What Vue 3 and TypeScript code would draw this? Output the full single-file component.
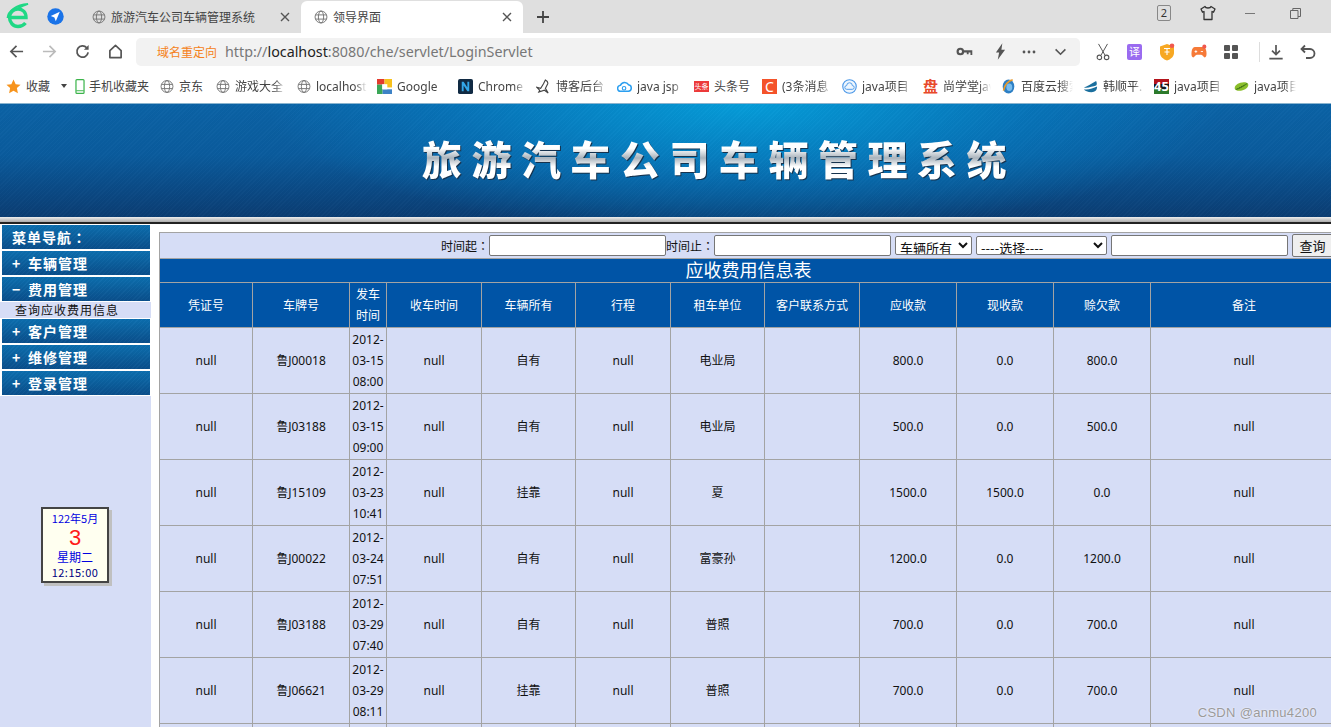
<script setup lang="ts">
const bookmarks = [
  { icon: 'star', text: '收藏', w: 69, caret: true },
  { icon: 'phone', text: '手机收藏夹', w: 85 },
  { icon: 'globe', text: '京东', w: 56 },
  { icon: 'globe', text: '游戏大全', w: 81, fade: true },
  { icon: 'globe', text: 'localhost', w: 80, fade: true },
  { icon: 'google', text: 'Google', w: 81, fade: true },
  { icon: 'n', text: 'Chrome', w: 78, fade: true },
  { icon: 'blog', text: '博客后台', w: 81, fade: true },
  { icon: 'cloud', text: 'java jsp', w: 77, fade: true },
  { icon: 'toutiao', text: '头条号', w: 68 },
  { icon: 'c', text: '(3条消息', w: 80, fade: true },
  { icon: 'pan', text: 'java项目', w: 81, fade: true },
  { icon: 'shang', text: '尚学堂java', w: 78, fade: true },
  { icon: 'baidu', text: '百度云搜索', w: 82, fade: true },
  { icon: 'han', text: '韩顺平.', w: 71, fade: true },
  { icon: 'n45', text: 'java项目', w: 80, fade: true },
  { icon: 'leaf', text: 'java项目', w: 72, fade: true },
]

const menu = [
  { mark: '+', label: '车辆管理' },
  { mark: '−', label: '费用管理', sub: '查询应收费用信息' },
  { mark: '+', label: '客户管理' },
  { mark: '+', label: '维修管理' },
  { mark: '+', label: '登录管理' },
]

const colWidths: number[] = [93, 97, 37, 95, 94, 95, 94, 95, 97, 97, 97, 187]
const heads: string[] = ['凭证号', '车牌号', '发车时间', '收车时间', '车辆所有', '行程', '租车单位', '客户联系方式', '应收款', '现收款', '赊欠款', '备注']
const rows: string[][] = [
  ['null', '鲁J00018', '2012-03-15 08:00', 'null', '自有', 'null', '电业局', '', '800.0', '0.0', '800.0', 'null'],
  ['null', '鲁J03188', '2012-03-15 09:00', 'null', '自有', 'null', '电业局', '', '500.0', '0.0', '500.0', 'null'],
  ['null', '鲁J15109', '2012-03-23 10:41', 'null', '挂靠', 'null', '夏', '', '1500.0', '1500.0', '0.0', 'null'],
  ['null', '鲁J00022', '2012-03-24 07:51', 'null', '自有', 'null', '富豪孙', '', '1200.0', '0.0', '1200.0', 'null'],
  ['null', '鲁J03188', '2012-03-29 07:40', 'null', '自有', 'null', '普照', '', '700.0', '0.0', '700.0', 'null'],
  ['null', '鲁J06621', '2012-03-29 08:11', 'null', '挂靠', 'null', '普照', '', '700.0', '0.0', '700.0', 'null'],
  ['null', '鲁J06621', '2012-03-29 08:30', 'null', '挂靠', 'null', '普照', '', '700.0', '0.0', '700.0', 'null'],
]
</script>

<template>
  <div class="page">
    <svg class="defs" aria-hidden="true">
      <symbol id="globe" viewBox="0 0 16 16">
        <g fill="none" stroke="#777" stroke-width="1.1">
          <circle cx="8" cy="8" r="6.8" />
          <ellipse cx="8" cy="8" rx="3" ry="6.8" />
          <path d="M1.6 5.6h12.8M1.6 10.4h12.8" />
        </g>
      </symbol>
    </svg>

    <!-- browser tab strip -->
    <div class="tabstrip">
      <svg class="logo" viewBox="0 0 24 26">
        <path d="M4 14.5h16C20 9 16.500 6 12 6c-5 0-8.500 3.800-8.500 8.500S7 23.500 12 23.500c3.200 0 5.800-1.300 7.500-3.500" fill="none" stroke="#20d885" stroke-width="3.400" />
        <path d="M1.500 15C2 8 10 2 22 1c-5 2-8 3-11 5" fill="none" stroke="#20d885" stroke-width="1.800" />
      </svg>
      <svg class="nav-badge" viewBox="0 0 17 17">
        <circle cx="8.500" cy="8.500" r="8.200" fill="#1a73e8" />
        <path d="M12.800 3.800 3.800 8l3.600 1.500 1.400 3.800z" fill="#fff" />
      </svg>
      <div class="tab">
        <svg class="ico14"><use href="#globe" /></svg>
        <span class="tab-title">旅游汽车公司车辆管理系统</span>
        <svg class="tab-x" viewBox="0 0 10 10"><path d="M1 1l8 8M9 1l-8 8" stroke="#555" stroke-width="1.400" /></svg>
      </div>
      <div class="tab active">
        <svg class="ico14"><use href="#globe" /></svg>
        <span class="tab-title">领导界面</span>
        <svg class="tab-x" viewBox="0 0 10 10"><path d="M1 1l8 8M9 1l-8 8" stroke="#555" stroke-width="1.400" /></svg>
      </div>
      <svg class="plus" viewBox="0 0 14 14"><path d="M7 1v12M1 7h12" stroke="#444" stroke-width="1.800" /></svg>
      <div class="win">
        <span class="count">2</span>
        <svg class="shirt" viewBox="0 0 16 16"><path d="M5 1.500 1 4l1.500 3.200L4 6.500V14.500h8V6.500l1.500.700L15 4l-4-2.500C10.500 3.500 5.500 3.500 5 1.500z" fill="none" stroke="#333" stroke-width="1.300" stroke-linejoin="round" /></svg>
        <span class="minimize"></span>
        <svg class="restore" viewBox="0 0 11 11"><path d="M.5 2.500h7.500v8H.5zM2.800 2.500V.5h7.700v8H8" fill="none" stroke="#666" stroke-width="1" /></svg>
      </div>
    </div>

    <!-- toolbar -->
    <div class="toolbar">
      <div class="nav-icons">
        <svg viewBox="0 0 16 16"><path d="M15 8H2M8 2 2 8l6 6" fill="none" stroke="#555" stroke-width="1.800" /></svg>
        <svg viewBox="0 0 16 16"><path d="M1 8h13M8 2l6 6-6 6" fill="none" stroke="#bbb" stroke-width="1.800" /></svg>
        <svg viewBox="0 0 16 16"><path d="M14 9a6 6 0 1 1-1.500-5" fill="none" stroke="#555" stroke-width="1.900" /><path d="M14.500 1v5h-5z" fill="#555" /></svg>
        <svg viewBox="0 0 16 16"><path d="M2 14.500V7l6-5.500L14 7v7.500z" fill="none" stroke="#555" stroke-width="1.800" stroke-linejoin="round" /></svg>
      </div>
      <div class="address">
        <span class="redirect">域名重定向</span>
        <span class="url">http://<b>localhost</b>:8080/che/servlet/LoginServlet</span>
        <div class="addr-icons">
          <svg class="i-key" viewBox="0 0 18 12"><circle cx="4.500" cy="6" r="3" fill="none" stroke="#555" stroke-width="2.400" /><path d="M7 4.700h10.500v5h-2V7h-2v2h-2V7H7z" fill="#555" /></svg>
          <svg class="i-bolt" viewBox="0 0 12 18"><path d="M8 0 1 10h3.500L3 18l8-11H7z" fill="#555" /></svg>
          <svg class="i-dots" viewBox="0 0 14 4"><circle cx="2" cy="2" r="1.400" fill="#555" /><circle cx="7" cy="2" r="1.400" fill="#555" /><circle cx="12" cy="2" r="1.400" fill="#555" /></svg>
          <svg class="i-chev" viewBox="0 0 14 9"><path d="M1.500 1.500 7 7l5.500-5.500" fill="none" stroke="#555" stroke-width="1.800" /></svg>
        </div>
      </div>
      <div class="ext-icons">
        <svg viewBox="0 0 16 20"><path d="M3 1l7.500 13M13 1 5.500 14" fill="none" stroke="#555" stroke-width="1.100" /><circle cx="4" cy="16" r="2.500" fill="none" stroke="#555" stroke-width="1.200" /><circle cx="12" cy="16" r="2.500" fill="none" stroke="#555" stroke-width="1.200" /></svg>
        <span class="translate">译</span>
        <svg viewBox="0 0 16 18"><path d="M1 3.500 8 1l7 2.500V10c0 3.500-3.500 6.500-7 7.500C4.500 16.500 1 13.500 1 10z" fill="#f7a823" /><path d="M5 5.500h6M8 5v7M5.500 9h5" stroke="#fff" stroke-width="1.100" /><circle cx="13" cy="2.800" r="2.300" fill="#f0584e" /></svg>
        <svg viewBox="0 0 18 17"><path d="M4.500 3h9c2 0 3.300 1.800 3.800 5 .4 2.800.2 6-1.300 6.500-1.800.6-2.800-3-4.500-3h-5c-1.700 0-2.700 3.600-4.500 3C.5 14 .3 10.800.7 8 1.200 4.800 2.500 3 4.500 3z" fill="#f67a38" /><path d="M4 8h3M5.500 6.500v3M11 8h2.500" stroke="#fff" stroke-width="1" /><circle cx="15" cy="2.500" r="2.300" fill="#f0584e" /></svg>
        <svg viewBox="0 0 16 16"><rect x="1" y="1" width="6" height="6" rx="1" fill="#555" /><rect x="9" y="1" width="6" height="6" rx="1" fill="#555" /><rect x="1" y="9" width="6" height="6" rx="1" fill="#555" /><rect x="9" y="9" width="6" height="6" rx="1" fill="#555" /></svg>
        <span class="divider"></span>
        <svg viewBox="0 0 18 18"><path d="M9 1v11M4.500 7.500 9 12l4.500-4.500M1.500 16.500h15" fill="none" stroke="#555" stroke-width="1.900" /></svg>
        <svg viewBox="0 0 16 16"><path d="M5 1.500 1.500 5 5 8.500M2 5h8a4.500 4.500 0 0 1 0 9H6" fill="none" stroke="#555" stroke-width="1.800" /></svg>
      </div>
    </div>

    <!-- bookmarks -->
    <div class="bookmarks">
      <div v-for="b in bookmarks" :key="b.icon + b.text" class="bm" :style="{ width: b.w + 'px' }">
        <svg v-if="b.icon === 'star'" class="bi" viewBox="0 0 16 16"><path d="M8 .5l2.300 5 5.200.6-3.900 3.600 1.100 5.400L8 12.400l-4.700 2.700 1.100-5.400L.5 6.100l5.200-.6z" fill="#f7941d" /></svg>
        <svg v-else-if="b.icon === 'phone'" class="bi phone" viewBox="0 0 10 16"><rect x=".7" y=".7" width="8.600" height="14.600" rx="1" fill="none" stroke="#3cb44b" stroke-width="1.300" /><path d="M1 12.500h8" stroke="#3cb44b" /></svg>
        <svg v-else-if="b.icon === 'globe'" class="bi globe"><use href="#globe" /></svg>
        <svg v-else-if="b.icon === 'google'" class="bi" viewBox="0 0 16 16"><rect width="8" height="6" fill="#e33b2e" /><rect x="8" width="8" height="9" fill="#f8c11c" /><rect y="6" width="6" height="10" fill="#3aa757" /><rect x="6" y="11" width="10" height="5" fill="#3d82c6" /><rect x="5.500" y="5.500" width="5.500" height="5.500" fill="#fff" /></svg>
        <svg v-else-if="b.icon === 'n'" class="bi" viewBox="0 0 16 16"><rect width="16" height="16" rx="2" fill="#102a43" /><path d="M4 13V3h2l4 6V3h2v10h-2L6 7v6z" fill="#33a7e8" /></svg>
        <svg v-else-if="b.icon === 'blog'" class="bi" viewBox="0 0 16 16"><path d="M10 1c2 1 3 2 2.500 4L10 10l3 5-4-3-6 2 1-2L1 9l4 1 3-5z" fill="none" stroke="#444" stroke-width="1.200" /></svg>
        <svg v-else-if="b.icon === 'cloud'" class="bi" viewBox="0 0 17 14"><path d="M4.500 12.500a3.500 3.500 0 0 1-.5-7A5 5 0 0 1 13 5a3.800 3.800 0 0 1 0 7.500z" fill="none" stroke="#2c9ff0" stroke-width="1.700" /><circle cx="8" cy="9" r="2" fill="none" stroke="#2c9ff0" stroke-width="1.300" /></svg>
        <span v-else-if="b.icon === 'toutiao'" class="bi toutiao">头条</span>
        <span v-else-if="b.icon === 'c'" class="bi c-ico">C</span>
        <svg v-else-if="b.icon === 'pan'" class="bi" viewBox="0 0 16 16"><circle cx="8" cy="8" r="7.200" fill="#eef6fe" stroke="#4a97e8" stroke-width="1.200" /><path d="M5 11a2 2 0 0 1 0-4 3 3 0 0 1 6 0 2 2 0 0 1 0 4z" fill="none" stroke="#4a97e8" stroke-width="1" /></svg>
        <span v-else-if="b.icon === 'shang'" class="bi shang">盘</span>
        <svg v-else-if="b.icon === 'baidu'" class="bi" viewBox="0 0 16 18"><ellipse cx="8" cy="9" rx="7" ry="8.500" fill="#2d7fc4" /><path d="M2 14C3 7 8 2 13 1" fill="none" stroke="#e89a2c" stroke-width="2" /><ellipse cx="9" cy="10" rx="3.500" ry="4.500" fill="#79bdee" /></svg>
        <svg v-else-if="b.icon === 'han'" class="bi" viewBox="0 0 16 14"><path d="M1 8c3-1 8-4 13-7 1 2 1 4 0 5-4 1-9 3-13 2zM1 10c4 1 10-1 14-3 0 4-2 6-6 6-4 0-7-1-8-3z" fill="#1a6f9e" /></svg>
        <span v-else-if="b.icon === 'n45'" class="bi n45">45</span>
        <svg v-else-if="b.icon === 'leaf'" class="bi" viewBox="0 0 17 13"><ellipse cx="8.500" cy="6.500" rx="8" ry="4.500" transform="rotate(-18 8.500 6.500)" fill="#8bbf2c" /><path d="M2 10C6 9 11 6 15 3" stroke="#4d8a1c" stroke-width="1.200" /></svg>
        <span class="bm-text" :class="{ fade: b.fade }">{{ b.text }}</span>
        <span v-if="b.caret" class="caret"></span>
      </div>
    </div>

    <!-- banner -->
    <header class="banner">
      <h1 class="banner-title">旅游汽车公司车辆管理系统</h1>
    </header>
    <div class="band"></div>

    <div class="content">
      <aside class="sidebar">
        <div class="menu-head">菜单导航：</div>
        <template v-for="m in menu" :key="m.label">
          <div class="menu-item"><span class="mark">{{ m.mark }}</span>{{ m.label }}</div>
          <div v-if="m.sub" class="menu-sub">{{ m.sub }}</div>
        </template>
        <div class="calendar">
          <div class="cal-ym">122年5月</div>
          <div class="cal-day">3</div>
          <div class="cal-week">星期二</div>
          <div class="cal-time">12:15:00</div>
        </div>
      </aside>

      <main class="main">
        <table class="grid">
          <colgroup>
            <col v-for="(w, i) in colWidths" :key="i" :style="{ width: w + 'px' }" />
          </colgroup>
          <tbody>
            <tr>
              <td colspan="12" class="search-cell">
                <div class="search">
                  <div class="pair"><span class="label">时间起：</span><input class="field" type="text" /></div>
                  <div class="pair"><span class="label">时间止：</span><input class="field" type="text" /></div>
                  <select class="sel sel-a"><option>车辆所有</option></select>
                  <select class="sel sel-b"><option>----选择----</option></select>
                  <input class="field" type="text" />
                  <button class="query" type="button">查询</button>
                </div>
              </td>
            </tr>
            <tr>
              <td colspan="12" class="title-cell">应收费用信息表</td>
            </tr>
            <tr class="head-row">
              <th v-for="h in heads" :key="h">{{ h }}</th>
            </tr>
            <tr v-for="(r, i) in rows" :key="i" class="data-row">
              <td v-for="(c, j) in r" :key="j">{{ c }}</td>
            </tr>
          </tbody>
        </table>
      </main>
    </div>

    <div class="watermark">CSDN @anmu4200</div>
  </div>
</template>

<style>
html, body {
  margin: 0;
  height: 100%;
  overflow: hidden;
  background: #fff;
}
</style>

<style scoped>
.page {
  position: relative;
  width: 1331px;
  height: 727px;
  overflow: hidden;
  font-family: "Noto Sans", "Noto Sans CJK SC", sans-serif;
  font-size: 12px;
  color: #111;
  background: #fff;
}
.defs { position: absolute; width: 0; height: 0; }

/* tab strip */
.tabstrip {
  display: flex;
  align-items: flex-end;
  height: 33px;
  background: #dfdfdf;
}
.logo { width: 24px; height: 26px; margin: 0 0 4px 6px; flex: none; }
.nav-badge { width: 17px; height: 17px; margin: 0 0 8px 17px; flex: none; }
.tab {
  display: flex;
  align-items: center;
  width: 223px;
  height: 32px;
  box-sizing: border-box;
  margin-left: 14px;
  padding: 0 11px 0 14px;
  flex: none;
  color: #444;
}
.tab.active {
  width: 222px;
  margin-left: 0;
  padding-left: 13px;
  background: #fff;
  border-radius: 6px 6px 0 0;
}
.ico14 { width: 14px; height: 14px; flex: none; }
.tab-title { margin-left: 5px; flex: 1; white-space: nowrap; }
.tab-x { width: 10px; height: 10px; flex: none; }
.plus { width: 14px; height: 14px; margin: 0 0 9px 13px; flex: none; }
.win {
  display: flex;
  align-items: center;
  margin-left: auto;
  align-self: flex-start;
  height: 26px;
}
.count {
  width: 12px;
  height: 14px;
  border: 1px solid #888;
  border-radius: 2px;
  line-height: 14px;
  text-align: center;
  font-size: 11px;
  color: #333;
}
.shirt { width: 16px; height: 16px; margin-left: 29px; }
.minimize { width: 10px; height: 1px; background: #777; margin-left: 29px; }
.restore { width: 11px; height: 11px; margin: 0 30px 0 35px; }

/* toolbar */
.toolbar {
  display: flex;
  align-items: center;
  height: 37px;
  background: #fff;
}
.nav-icons {
  display: flex;
  align-items: center;
  gap: 18px;
  padding-left: 9px;
  width: 136px;
  box-sizing: border-box;
  flex: none;
}
.nav-icons svg { width: 15px; height: 15px; flex: none; }
.address {
  display: flex;
  align-items: center;
  width: 944px;
  height: 28px;
  box-sizing: border-box;
  padding-left: 21px;
  background: #f2f2f2;
  border-radius: 5px;
  flex: none;
}
.redirect { color: #f58220; font-size: 12px; }
.url { margin-left: 8px; font-size: 14.3px; color: #777; white-space: nowrap; }
.url b { font-weight: 400; color: #222; }
.addr-icons { display: flex; align-items: center; margin-left: auto; }
.i-key { width: 17px; height: 11px; margin-right: 22px; }
.i-bolt { width: 11px; height: 17px; margin-right: 16px; }
.i-dots { width: 14px; height: 4px; margin-right: 18px; }
.i-chev { width: 13px; height: 8px; margin-right: 13px; }
.ext-icons {
  display: flex;
  align-items: center;
  margin-left: 15px;
}
.ext-icons svg { width: 16px; height: 18px; flex: none; margin-right: 16px; }
.translate {
  width: 15px;
  height: 16px;
  line-height: 16px;
  text-align: center;
  font-size: 11px;
  color: #fff;
  background: #9a6bf0;
  border-radius: 2px;
  margin-right: 17px;
  flex: none;
}
.divider { width: 1px; height: 20px; background: #ddd; margin: 0 8px 0 4px; }

/* bookmarks */
.bookmarks {
  display: flex;
  align-items: center;
  height: 33px;
  box-sizing: border-box;
  padding: 0 0 1px 6px;
  background: #fff;
}
.bm {
  display: flex;
  align-items: center;
  flex: none;
  overflow: hidden;
  height: 18px;
  color: #444;
  white-space: nowrap;
}
.bi { width: 15px; height: 15px; flex: none; margin-right: 5px; }
.bi.phone { width: 10px; margin-right: 4px; }
.bi.globe { width: 14px; }
.bm-text {
  flex: 1;
  min-width: 0;
  overflow: hidden;
  margin-right: 10px;
}
.bm-text.fade {
  -webkit-mask-image: linear-gradient(to right, #000 75%, transparent);
  mask-image: linear-gradient(to right, #000 75%, transparent);
}
.bm:first-child .bm-text { margin-right: 0; flex: none; }
.caret {
  width: 0;
  height: 0;
  margin-left: 11px;
  border: 3px solid transparent;
  border-top: 4px solid #444;
  border-bottom: 0;
}
.toutiao, .c-ico, .shang, .n45 {
  display: block;
  text-align: center;
  color: #fff;
  line-height: 15px;
}
.toutiao { background: #ec3a3a; font-size: 7px; height: 11px; line-height: 11px; }
.c-ico { background: #f4532a; font-size: 14px; height: 15px; }
.shang { color: #e8492a; font-size: 15px; font-weight: 700; }
.n45 {
  background: linear-gradient(#b3141c 0 35%, #16181c 35% 70%, #2c7a2c 70%);
  font-size: 13px;
  font-weight: 700;
}

/* banner */
.banner {
  display: flex;
  align-items: center;
  height: 114px;
  box-sizing: border-box;
  padding: 0 0 5px 422px;
  background:
    repeating-linear-gradient(135deg, rgba(255,255,255,.015) 0 1px, rgba(0,0,0,.015) 1px 3px),
    radial-gradient(ellipse 480px 130px at 56% 0, rgba(5,160,220,.95), rgba(5,130,200,.55) 60%, rgba(10,90,160,0) 100%),
    linear-gradient(#0b63a6, #0a5b9d 45%, #0b3d73);
  border-top: 1px solid #8ab4cf;
}
.banner-title {
  margin: 0;
  font-family: "Noto Sans CJK SC", sans-serif;
  font-weight: 900;
  font-size: 40px;
  line-height: 48px;
  letter-spacing: 9.500px;
  white-space: nowrap;
  background: linear-gradient(#fff 0 30%, #a9b3bc 50%, #fff 68% 100%);
  -webkit-background-clip: text;
  background-clip: text;
  color: transparent;
  filter: drop-shadow(1px 1px 0 #16324d);
}
.band {
  height: 5px;
  background: linear-gradient(#eee, #aaa);
  border-bottom: 2px solid #222;
}

/* content */
.content {
  display: flex;
  align-items: stretch;
  padding-top: 1px;
}
.sidebar {
  width: 151px;
  min-height: 600px;
  background: #d6ddf6;
  flex: none;
  background-image: linear-gradient(#fff 0 171px, transparent 171px);
}
.menu-head, .menu-item {
  height: 24px;
  line-height: 24px;
  margin: 0 1px 2px 2px;
  padding-left: 10px;
  color: #fff;
  font-weight: 700;
  font-size: 14px;
  letter-spacing: 1px;
  font-family: "Noto Sans CJK SC", sans-serif;
  background:
    repeating-linear-gradient(135deg, rgba(255,255,255,.025) 0 1px, rgba(0,0,0,.025) 1px 3px),
    linear-gradient(#0c6fb0, #0a4f8c);
}
.menu-head { font-family: "Noto Sans CJK TC", sans-serif; }
.mark {
  display: inline-block;
  width: 16px;
}
.menu-sub {
  height: 16px;
  line-height: 16px;
  margin: -1px 0 1px;
  padding-left: 15px;
  background: #d6ddf6;
  font-size: 12px;
  letter-spacing: 1px;
  font-family: "Noto Sans CJK SC", sans-serif;
}
.calendar {
  width: 64px;
  height: 72px;
  margin: 112px 0 0 41px;
  border: 2px solid #444;
  background: #fffff0;
  box-shadow: 3px 3px 0 #c0c0c0;
  text-align: center;
  color: #0000e0;
  font-family: "Noto Sans CJK SC", sans-serif;
}
.cal-ym { font-size: 11px; line-height: 16px; margin-top: 1px; }
.cal-day { font-size: 22px; line-height: 23px; color: #ff1a1a; font-family: "Liberation Sans", sans-serif; }
.cal-week { font-size: 12px; line-height: 16px; }
.cal-time { font-size: 11px; line-height: 14px; letter-spacing: .5px; color: #000080; }

.main {
  margin: 7px 0 0 8px;
  flex: none;
}
.grid {
  border-collapse: collapse;
  table-layout: fixed;
  width: 1178px;
  background: #d6ddf6;
}
.grid td, .grid th {
  border: 1px solid #a3a3a3;
  padding: 0 1px;
  text-align: center;
  font-size: 12px;
  font-weight: 400;
  line-height: 21px;
}
.grid .search-cell { height: 25px; padding-right: 4px; }
.search {
  display: flex;
  justify-content: flex-end;
  align-items: center;
  gap: 4px;
}
.pair { display: flex; align-items: center; }
.label { font-family: "Noto Sans CJK TC", sans-serif; }
.field {
  box-sizing: border-box;
  width: 177px;
  height: 21px;
  padding: 1px 2px;
  border: 1px solid #767676;
  border-radius: 2px;
  background: #fff;
  font-size: 13px;
}
.pair:first-child { margin-right: -4px; }
.sel {
  box-sizing: border-box;
  height: 19px;
  border: 1px solid #767676;
  border-radius: 2px;
  background: #fff;
  color: #111;
  font-family: "Noto Sans CJK SC", sans-serif;
  font-size: 13px;
  padding: 0;
}
.sel-a { width: 77px; }
.sel-b { width: 131px; }
.query {
  box-sizing: border-box;
  width: 41px;
  height: 23px;
  padding: 0;
  border: 1px solid #767676;
  border-radius: 2px;
  background: #efefef;
  color: #111;
  font-family: "Noto Sans CJK SC", sans-serif;
  font-size: 13px;
}
.grid .title-cell {
  height: 23px;
  background: #0054a6;
  color: #fff;
  font-size: 18px;
  line-height: 23px;
}
.head-row th {
  height: 44px;
  background: #0054a6;
  color: #fff;
}
.data-row td {
  height: 65px;
}

.watermark {
  position: absolute;
  right: 14px;
  bottom: 7px;
  font-size: 13px;
  font-family: "Liberation Sans", sans-serif;
  letter-spacing: .3px;
  color: #9a9a9a;
  text-shadow: 0 0 2px #fff;
}
</style>
